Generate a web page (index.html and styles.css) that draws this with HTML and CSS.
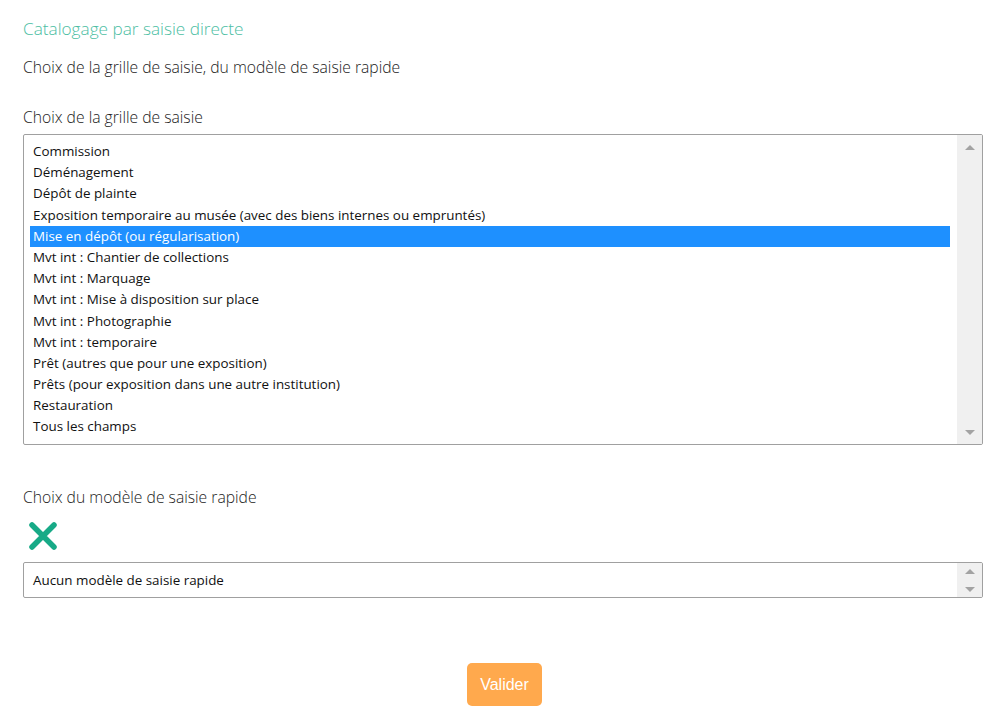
FILE: index.html
```html
<!DOCTYPE html>
<html lang="fr">
<head>
<meta charset="utf-8">
<link rel="stylesheet" href="styles.css">
</head>
<body>
<div class="page">
  <h1 class="title">Catalogage par saisie directe</h1>
  <p class="subtitle">Choix de la grille de saisie, du modèle de saisie rapide</p>

  <div class="field">
    <div class="label">Choix de la grille de saisie</div>
    <div class="listbox">
      <ul class="options">
        <li>Commission</li>
        <li>Déménagement</li>
        <li>Dépôt de plainte</li>
        <li>Exposition temporaire au musée (avec des biens internes ou empruntés)</li>
        <li class="selected">Mise en dépôt (ou régularisation)</li>
        <li>Mvt int : Chantier de collections</li>
        <li>Mvt int : Marquage</li>
        <li>Mvt int : Mise à disposition sur place</li>
        <li>Mvt int : Photographie</li>
        <li>Mvt int : temporaire</li>
        <li>Prêt (autres que pour une exposition)</li>
        <li>Prêts (pour exposition dans une autre institution)</li>
        <li>Restauration</li>
        <li>Tous les champs</li>
      </ul>
      <div class="scrollbar">
        <span class="arrow up"></span>
        <span class="arrow down"></span>
      </div>
    </div>
  </div>

  <div class="field field-second">
    <div class="label">Choix du modèle de saisie rapide</div>
    <svg class="clear-icon" width="30" height="30" viewBox="0 0 30 30" aria-hidden="true">
      <path d="M4 4 L26 26 M26 4 L4 26" stroke="#17aa87" stroke-width="5.5" stroke-linecap="round"/>
    </svg>
    <div class="listbox small">
      <ul class="options">
        <li>Aucun modèle de saisie rapide</li>
      </ul>
      <div class="scrollbar">
        <span class="arrow up"></span>
        <span class="arrow down"></span>
      </div>
    </div>
  </div>

  <div class="actions">
    <button class="btn">Valider</button>
  </div>
</div>
</body>
</html>
```

FILE: styles.css
```css
html, body {
  margin: 0;
  padding: 0;
  background: #ffffff;
}

body {
  font-family: "Open Sans", "Noto Sans", sans-serif;
  color: #222;
}

.page {
  padding: 17px 3px 0 23px;
}

.title {
  margin: 0;
  font-size: 17.2px;
  font-weight: 300;
  color: #4cbea3;
  line-height: 24px;
}

.subtitle {
  margin: 14px 0 0 0;
  font-size: 15.7px;
  font-weight: 300;
  color: #222;
  line-height: 24px;
}

.field {
  margin-top: 26px;
}

.label {
  font-size: 15.7px;
  font-weight: 300;
  color: #222;
  line-height: 24px;
  margin-bottom: 5px;
}

.listbox {
  display: flex;
  border: 1px solid #a0a0a0;
  border-radius: 2px;
  height: 311px;
  box-sizing: border-box;
  background: #fff;
  overflow: hidden;
}

.options {
  flex: 1;
  list-style: none;
  margin: 0;
  padding: 6px 7px 0 6px;
}

.options li {
  font-size: 13.4px;
  line-height: 21.2px;
  height: 21.2px;
  padding-left: 3px;
  color: #111;
  white-space: nowrap;
}

.options li.selected {
  background: #1e90ff;
  color: #fff;
}

.scrollbar {
  width: 25px;
  background: #f0f0f0;
  display: flex;
  flex-direction: column;
  justify-content: space-between;
  align-items: center;
  padding: 10px 0 9px;
}

.arrow {
  width: 0;
  height: 0;
  border-left: 5px solid transparent;
  border-right: 5px solid transparent;
}

.arrow.up {
  border-bottom: 5px solid #a3a3a3;
}

.arrow.down {
  border-top: 5px solid #a3a3a3;
}

.field-second {
  margin-top: 40px;
}

.field-second .label {
  margin-bottom: 0;
}

.clear-icon {
  display: block;
  margin: 12px 0 11px 5px;
}

.listbox.small {
  height: 36px;
}

.listbox.small .options {
  padding-top: 7px;
}

.listbox.small .scrollbar {
  padding: 6px 0 5px;
}

.actions {
  display: flex;
  justify-content: center;
  margin-top: 65px;
}

.btn {
  font-family: "Liberation Sans", Arial, sans-serif;
  font-size: 16px;
  color: #fff;
  background: #ffa94d;
  border: none;
  border-radius: 5px;
  padding: 0 12px;
  height: 43px;
  width: 75px;
  margin-left: 3px;
}
```
